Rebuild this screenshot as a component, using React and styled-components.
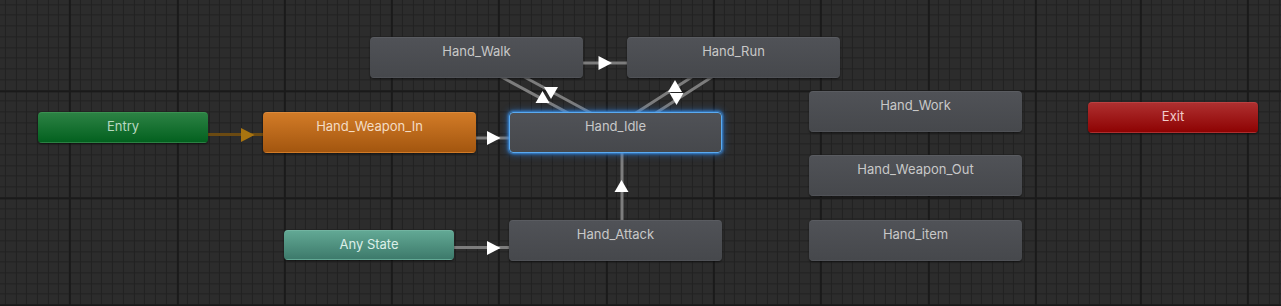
import React from 'react'
import styled, { createGlobalStyle } from 'styled-components'

const GlobalStyle = createGlobalStyle`
  html, body {
    margin: 0;
    padding: 0;
    background: #2a2a2a;
  }
`

const Canvas = styled.div`
  position: relative;
  width: 1281px;
  height: 306px;
  overflow: hidden;
  background-color: #2c2c2c;
  background-image:
    repeating-linear-gradient(to right, #1a1a1a 0 2px, transparent 2px 107.3px),
    repeating-linear-gradient(to bottom, #1a1a1a 0 2px, transparent 2px 107.3px),
    repeating-linear-gradient(to right, #212121 0 1px, transparent 1px 10.73px),
    repeating-linear-gradient(to bottom, #212121 0 1px, transparent 1px 10.73px);
  background-size: 1500px 500px;
  background-position: -360.1px -124.6px, -360.1px -124.6px, -360.1px -124.6px, -360.1px -124.6px;
`

const Wires = styled.svg`
  position: absolute;
  left: 0;
  top: 0;
  width: 1281px;
  height: 306px;
  pointer-events: none;
`

const kinds = {
  state: {
    bg: 'linear-gradient(#505257, #46484c)',
    border: '#5a5c61',
    color: '#c8c8c8',
  },
  entry: {
    bg: 'linear-gradient(#2c8244, #03611f)',
    border: '#3a9150',
    color: '#b9d9c1',
  },
  start: {
    bg: 'linear-gradient(#d27b27, #a3560f)',
    border: '#dc8a3c',
    color: '#f3dcc4',
  },
  any: {
    bg: 'linear-gradient(#62a894, #3d7a6b)',
    border: '#72b4a1',
    color: '#dcefe9',
  },
  exit: {
    bg: 'linear-gradient(#ae2f2f, #8e0303)',
    border: '#bb4141',
    color: '#f2cccc',
  },
}

const Node = styled.div`
  position: absolute;
  left: ${p => p.$x}px;
  top: ${p => p.$y}px;
  width: ${p => p.$w}px;
  height: ${p => p.$h}px;
  box-sizing: border-box;
  padding-top: 5px;
  border-radius: 4px;
  border: 1px solid ${p => p.$active ? '#5aaaf0' : 'transparent'};
  border-top-color: ${p => p.$active ? '#5aaaf0' : kinds[p.$kind].border};
  background: ${p => kinds[p.$kind].bg};
  box-shadow: ${p => p.$active
    ? '0 0 3px 1px rgba(60, 150, 240, 0.9), 0 0 7px 2px rgba(40, 120, 220, 0.45)'
    : '0 1px 2px rgba(0, 0, 0, 0.55)'};
  color: ${p => kinds[p.$kind].color};
  font-family: Inter, "Noto Sans", sans-serif;
  font-size: 13px;
  line-height: 16px;
  text-align: center;
  white-space: nowrap;
`

const nodes = [
  { label: 'Entry', kind: 'entry', x: 38, y: 112, w: 170, h: 31 },
  { label: 'Hand_Weapon_In', kind: 'start', x: 263, y: 112, w: 213, h: 41 },
  { label: 'Hand_Walk', kind: 'state', x: 370, y: 37, w: 213, h: 41 },
  { label: 'Hand_Run', kind: 'state', x: 627, y: 37, w: 213, h: 41 },
  { label: 'Hand_Idle', kind: 'state', x: 509, y: 112, w: 213, h: 41, active: true },
  { label: 'Hand_Work', kind: 'state', x: 809, y: 91, w: 213, h: 41 },
  { label: 'Hand_Weapon_Out', kind: 'state', x: 809, y: 155, w: 213, h: 41 },
  { label: 'Hand_item', kind: 'state', x: 809, y: 220, w: 213, h: 41 },
  { label: 'Any State', kind: 'any', x: 284, y: 230, w: 170, h: 30 },
  { label: 'Hand_Attack', kind: 'state', x: 509, y: 220, w: 213, h: 41 },
  { label: 'Exit', kind: 'exit', x: 1088, y: 102, w: 170, h: 31 },
]

// transitions: line ends plus where the arrow head sits and which way it points
const wires = [
  { x1: 207, y1: 134.5, x2: 263, y2: 134.5, head: [241, 135, 'right'], entry: true },
  { x1: 475, y1: 138, x2: 509, y2: 138, head: [487, 138, 'right'] },
  { x1: 582, y1: 63, x2: 627, y2: 63, head: [598.5, 63, 'right'] },
  { x1: 478.6, y1: 52.2, x2: 618.1, y2: 127.7, head: [551, 92.5, 'down'] },
  { x1: 473.4, y1: 61.8, x2: 612.9, y2: 137.3, head: [542.5, 97.5, 'up'] },
  { x1: 736, y1: 61.6, x2: 618.5, y2: 137.1, head: [676.5, 98.5, 'down'] },
  { x1: 730, y1: 52.4, x2: 612.5, y2: 127.9, head: [675, 86.5, 'up'] },
  { x1: 622, y1: 221, x2: 622, y2: 152, head: [621.5, 186.5, 'up'] },
  { x1: 453, y1: 247.5, x2: 509, y2: 247.5, head: [487, 248, 'right'] },
]

const headPoints = (x, y, dir) => {
  if (dir === 'right') return `${x},${y - 7} ${x},${y + 7} ${x + 13.5},${y}`
  if (dir === 'up') return `${x - 7},${y + 5.5} ${x + 7},${y + 5.5} ${x},${y - 6.5}`
  return `${x - 7},${y - 5.5} ${x + 7},${y - 5.5} ${x},${y + 6.5}`
}

export default function App() {
  return (
    <>
      <GlobalStyle />
      <Canvas>
        <Wires viewBox="0 0 1281 306">
          {wires.map((w, i) => (
            <g key={i}>
              <line
                x1={w.x1} y1={w.y1} x2={w.x2} y2={w.y2}
                stroke={w.entry ? '#6b4a12' : '#7d7d7d'}
                strokeWidth="3"
              />
              <polygon
                points={headPoints(w.head[0], w.head[1], w.head[2])}
                fill={w.entry ? '#a87410' : '#ffffff'}
              />
            </g>
          ))}
        </Wires>
        {nodes.map(n => (
          <Node
            key={n.label}
            $kind={n.kind}
            $x={n.x}
            $y={n.y}
            $w={n.w}
            $h={n.h}
            $active={n.active}
          >
            {n.label}
          </Node>
        ))}
      </Canvas>
    </>
  )
}
